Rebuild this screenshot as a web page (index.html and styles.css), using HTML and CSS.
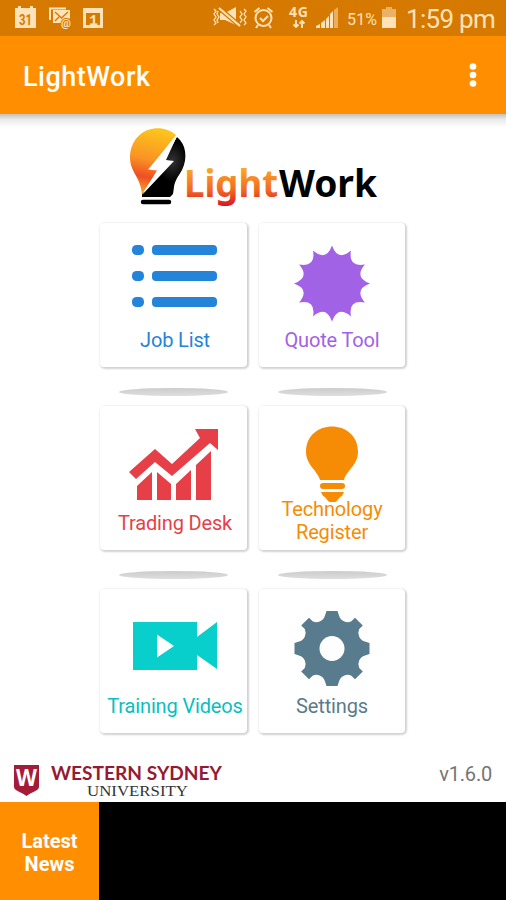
FILE: index.html
```html
<!DOCTYPE html>
<html lang="en">
<head>
  <meta charset="UTF-8" />
  <meta name="viewport" content="width=device-width, initial-scale=1.0" />
  <title>LightWork</title>
  <link rel="stylesheet" href="styles.css">
</head>
<body>
  <div class="status-bar">
    <svg class="status-left" width="110" height="36" viewBox="0 0 110 36">
      <path d="M15 8h3V6h3v2h9V6h3v2h3v20H15z" fill="#ffe2b8"/>
      <text x="19" y="24.500" textLength="13" lengthAdjust="spacingAndGlyphs" class="cal-num">31</text>
      <path d="M50 20V8.500h16" fill="none" stroke="#ffe2b8" stroke-width="2"/>
      <path d="M53 10h17v8l-4 5H53z" fill="#ffe2b8"/>
      <path d="M55 12l6.500 6L68 12M55 21l4-4" fill="none" stroke="#d67900" stroke-width="1.400"/>
      <text x="61" y="27" class="at">@</text>
      <path d="M83 8h20v20H83zM86 13v12h14V13z" fill="#ffe2b8" fill-rule="evenodd"/>
      <text x="89" y="25" class="cal-one">1</text>
    </svg>
    <svg class="status-right" width="196" height="36" viewBox="210 0 196 36">
      <g fill="none" stroke="#ffe2b8" stroke-width="1.300">
        <path d="M214 9l2 2-2 3 2 3-2 3 2 3-2 2M218 11l-1 3 2 3-2 3 1 3M240 11l2 3-2 3 2 3-2 3M244 9l2 2-2 3 2 3-2 3 2 3-2 2"/>
      </g>
      <path d="M220 13h5l11-6v18l-11-5h-5z" fill="#ffe2b8"/>
      <path d="M219 8l21 18" stroke="#d67900" stroke-width="4.500"/>
      <path d="M219 8l21 18" stroke="#ffe2b8" stroke-width="2.200"/>
      <g fill="none" stroke="#ffe2b8" stroke-width="2">
        <circle cx="263.500" cy="18" r="8"/>
        <path d="M260 18l3 3 5-5M254.500 12l5-4M272.500 12l-5-4M258 25l-2 3M269 25l2 3"/>
      </g>
      <text x="289" y="16.500" textLength="19" class="net">4G</text>
      <path d="M296 20v7M293.500 24.500L296 27l2.500-2.500M302 28v-7M299.500 23.500L302 21l2.500 2.500" fill="none" stroke="#ffe2b8" stroke-width="1.900"/>
      <path d="M316 28v-2l4-2v4zM321 28v-5l4-3v8zM326 28v-9l3-3v12zM330 28V14l3-3v17z" fill="#ffe2b8"/>
      <path d="M334 28V10l4-3v21z" fill="#ebae5d"/>
      <text x="347" y="25" textLength="30" class="battery">51%</text>
      <path d="M382 9h4V7h6v2h4v8h-14z" fill="#eab267"/>
      <path d="M382 17h14v11h-14z" fill="#ffe2b8"/>
    </svg>
    <span class="clock">1:59 pm</span>
  </div>

  <header class="app-bar">
    <h1 class="app-title">LightWork</h1>
    <svg class="menu" width="8" height="26" viewBox="0 0 8 26" fill="#fff">
      <circle cx="4" cy="4.500" r="3.300"/><circle cx="4" cy="13" r="3.300"/><circle cx="4" cy="21.500" r="3.300"/>
    </svg>
  </header>

  <main class="home">
    <svg class="logo" width="254" height="84" viewBox="0 0 254 84">
      <defs>
        <linearGradient id="bulb" x1="0.300" y1="0" x2="0.150" y2="1">
          <stop offset="0" stop-color="#fdc21c"/><stop offset="0.450" stop-color="#f99325"/><stop offset="0.720" stop-color="#ef4e23"/><stop offset="1" stop-color="#fbb02b"/>
        </linearGradient>
        <linearGradient id="word" x1="0" y1="0" x2="0" y2="1">
          <stop offset="0.200" stop-color="#fbae25"/><stop offset="0.650" stop-color="#f16a25"/><stop offset="0.950" stop-color="#dc1820"/>
        </linearGradient>
        <radialGradient id="dark" cx="0.700" cy="0.400" r="0.350">
          <stop offset="0" stop-color="#333"/><stop offset="1" stop-color="#000"/>
        </radialGradient>
      </defs>
      <path d="M49 9C33-5 4 3 3 31c0 16 10 18 12 37l16-24-9-1z" fill="url(#bulb)"/>
      <path d="M50 11c9 7 11 21 5 33-4 7-7 10-8 17l-1 7-3 3H15v-3l30-32-8-2z" fill="url(#dark)"/>
      <path d="M50 10L21 43.500l9 1L15 69l32-34-8-1z" fill="#fff"/>
      <path d="M16 76h26" stroke="#000" stroke-width="4.500" stroke-linecap="round"/>
      <text x="57" y="71" textLength="94" lengthAdjust="spacingAndGlyphs" class="logo-text" fill="url(#word)">Light</text>
      <text x="152" y="71" textLength="98" lengthAdjust="spacingAndGlyphs" class="logo-text">Work</text>
    </svg>

    <nav class="tiles">
      <div class="tile job">
        <a class="card">
          <svg class="icon" width="147" height="106" viewBox="0 0 147 106" fill="#2484da">
            <rect x="32" y="22" width="12" height="10" rx="4.500"/><rect x="52" y="22" width="65" height="10" rx="4"/>
            <rect x="32" y="48" width="12" height="10" rx="4.500"/><rect x="52" y="48" width="65" height="10" rx="4"/>
            <rect x="32" y="74" width="12" height="10" rx="4.500"/><rect x="52" y="74" width="65" height="10" rx="4"/>
          </svg>
          <span class="label label-left">Job List</span>
        </a>
        <i class="shade"></i>
      </div>
      <div class="tile quote">
        <a class="card">
          <svg class="icon" width="146" height="106" viewBox="0 0 146 106" fill="#a262e6">
            <path transform="translate(73 60.500)" d="M38 0Q21.700 5.800 32.900 19Q15.900 15.900 19 32.900Q5.800 21.700 0 38Q-5.800 21.700-19 32.900Q-15.900 15.900-32.900 19Q-21.700 5.800-38 0Q-21.700-5.800-32.900-19Q-15.900-15.900-19-32.900Q-5.800-21.700 0-38Q5.800-21.700 19-32.900Q15.900-15.900 32.900-19Q21.700-5.800 38 0z"/>
          </svg>
          <span class="label">Quote Tool</span>
        </a>
        <i class="shade"></i>
      </div>
      <div class="tile trading">
        <a class="card">
          <svg class="icon" width="147" height="106" viewBox="0 0 147 106" fill="#e73f48">
            <path d="M29 66l26-23 17 15 28-26-5-9h23v21l-8-7-38 33-17-14-19 17z"/>
            <path d="M37 80l15-14v28H37zM57 66l14 12v16H57zM76 78l15-14v30H76zM96 59l15-14v49H96z"/>
          </svg>
          <span class="label label-left">Trading Desk</span>
        </a>
        <i class="shade"></i>
      </div>
      <div class="tile technology">
        <a class="card">
          <svg class="icon" width="146" height="106" viewBox="0 0 146 106" fill="#f68c05">
            <path d="M61 74c-2-9-14-15-14-28 0-34 52-34 52 0 0 13-12 19-14 28z"/>
            <rect x="61" y="77" width="25" height="6" rx="3"/>
            <path d="M62 86h23l-2 4c-3 1-5 6-7 6h-5c-2 0-4-5-7-6z"/>
          </svg>
          <span class="label label-two">Technology<br>Register</span>
        </a>
        <i class="shade"></i>
      </div>
      <div class="tile training">
        <a class="card">
          <svg class="icon" width="147" height="106" viewBox="0 0 147 106" fill="#08cfcc">
            <path d="M33 33h64v15l20-15v47L97 66v15H33z"/>
            <path d="M57 45.500v23l17-11.500z" fill="#fff"/>
          </svg>
          <span class="label label-left">Training Videos</span>
        </a>
      </div>
      <div class="tile settings">
        <a class="card">
          <svg class="icon" width="146" height="106" viewBox="0 0 146 106" fill="#587b8d">
            <g transform="translate(73 59.500)">
              <path d="M37.500-5.500V5.500L33 7A9 9 0 0 0 27.200 19.400L30.800 23 23 30.800 19.400 27.200A9 9 0 0 0 7 33L5.500 37.500H-5.500L-7 33A9 9 0 0 0-19.400 27.200L-23 30.800-30.800 23-27.200 19.400A9 9 0 0 0-33 7L-37.500 5.500V-5.500L-33-7A9 9 0 0 0-27.200-19.400L-30.800-23-23-30.800-19.400-27.200A9 9 0 0 0-7-33L-5.500-37.500H5.500L7-33A9 9 0 0 0 19.400-27.200L23-30.800 30.800-23 27.200-19.400A9 9 0 0 0 33-7z"/>
              <circle r="12.500" fill="#fff"/>
            </g>
          </svg>
          <span class="label">Settings</span>
        </a>
      </div>
    </nav>

    <div class="info">
      <svg class="university" width="212" height="40" viewBox="0 0 212 40">
        <path d="M0 3h25v22c0 4-8 5-12.500 9C8 30 0 29 0 25z" fill="#a51c38"/>
        <text x="2" y="24" textLength="21" lengthAdjust="spacingAndGlyphs" class="shield-w">W</text>
        <text x="37" y="18" textLength="171" lengthAdjust="spacingAndGlyphs" class="uni-name">WESTERN SYDNEY</text>
        <text x="73" y="34" textLength="101" lengthAdjust="spacingAndGlyphs" class="uni-sub">UNIVERSITY</text>
      </svg>
      <span class="version">v1.6.0</span>
    </div>
  </main>

  <footer class="news">
    <div class="news-title">Latest<br>News</div>
    <div class="news-feed"></div>
  </footer>
</body>
</html>
```

FILE: styles.css
```css
* {
  box-sizing: border-box;
}
body {
  margin: 0;
  height: 900px;
  display: flex;
  flex-direction: column;
  overflow: hidden;
  background: #fff;
  font-family: Roboto, sans-serif;
}
svg {
  display: block;
  flex: none;
}
.status-bar {
  display: flex;
  align-items: center;
  height: 36px;
  background: #d67900;
  color: #ffe2b8;
}
.status-left {
  margin-right: 100px;
}
.cal-num {
  font: bold 14px Roboto, sans-serif;
  fill: #d67900;
}
.cal-one {
  font: bold 15px "Liberation Mono", monospace;
  fill: #ffe2b8;
}
.at {
  font: bold 11px Roboto, sans-serif;
  fill: #ffe2b8;
  stroke: #d67900;
  stroke-width: 2px;
  paint-order: stroke;
}
.net {
  font: bold 14px "Open Sans", sans-serif;
  fill: #ffe2b8;
}
.battery {
  font: 16px Roboto, sans-serif;
  fill: #ffe2b8;
}
.clock {
  font-size: 26px;
  line-height: 36px;
  letter-spacing: -0.7px;
  padding-top: 2px;
  white-space: nowrap;
}
.app-bar {
  display: flex;
  align-items: center;
  justify-content: space-between;
  height: 78px;
  padding: 0 29px 0 23px;
  background: #ff8f00;
  color: #fff;
}
.app-title {
  margin: 4px 0 0;
  font-size: 27px;
  font-weight: 500;
  letter-spacing: 0.5px;
}
.home {
  display: flex;
  flex-direction: column;
  height: 688px;
  background: linear-gradient(#c4c0bc, #e8e8e8 5px, #fff 13px);
}
.logo {
  margin: 12px 0 0 127px;
}
.logo-text {
  font: bold 38px "Noto Sans", "Open Sans", sans-serif;
}
.tiles {
  display: grid;
  grid-template-columns: 147px 146px;
  column-gap: 12px;
  grid-auto-rows: 183px;
  margin: 13px 0 0 100px;
  height: 530px;
}
.tile {
  display: flex;
  flex-direction: column;
  align-items: center;
}
.card {
  display: flex;
  flex-direction: column;
  align-items: center;
  width: 100%;
  height: 144px;
  border-radius: 4px;
  background: #fff;
  box-shadow: 1px 1px 2px 1px #d2d2d2;
}
.label {
  font-size: 20px;
  line-height: 23px;
  letter-spacing: -0.15px;
  white-space: nowrap;
  text-align: center;
}
.label-left {
  padding-left: 3px;
}
.label-two {
  margin-top: -14px;
}
.shade {
  width: 109px;
  height: 8px;
  margin-top: 21px;
  border-radius: 50%;
  background: linear-gradient(#ccc, #dedede);
}
.job { color: #2484da; }
.quote { color: #a262e6; }
.trading { color: #e73f48; }
.technology { color: #f68c05; }
.training { color: #08bfc0; }
.settings { color: #587b8d; }
.info {
  display: flex;
  justify-content: space-between;
  margin-top: auto;
  height: 40px;
  padding: 0 14px;
}
.shield-w {
  font: bold 23px "Open Sans", sans-serif;
  fill: #fff;
}
.uni-name {
  font: bold 18.5px Lato, sans-serif;
  fill: #961a32;
}
.uni-sub {
  font: 15px "Liberation Serif", serif;
  fill: #333;
}
.version {
  font-size: 20px;
  line-height: 24px;
  letter-spacing: -0.2px;
  color: #757575;
}
.news {
  display: flex;
  height: 98px;
}
.news-title {
  width: 99px;
  padding-top: 28px;
  background: #ff8f00;
  color: #fff;
  font-size: 20px;
  font-weight: bold;
  line-height: 23px;
  text-align: center;
}
.news-feed {
  flex: 1;
  background: #000;
}
```
